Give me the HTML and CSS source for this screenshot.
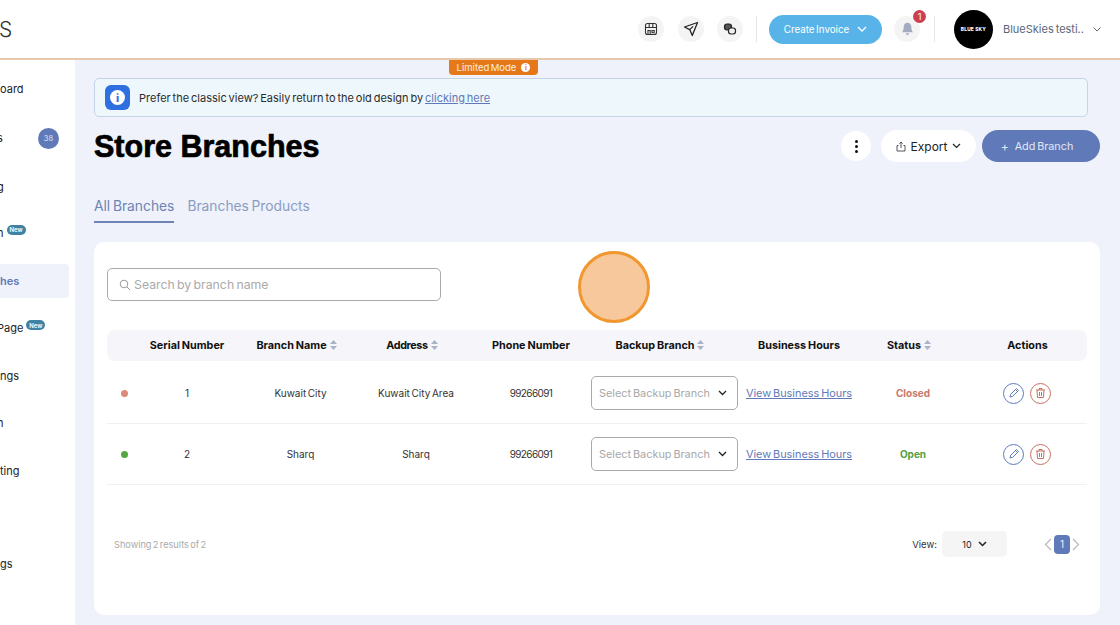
FILE: index.html
```html
<!DOCTYPE html>
<html lang="en">
<head>
<meta charset="utf-8">
<title>Store Branches</title>
<link rel="stylesheet" href="styles.css">
</head>
<body>
<header class="topbar">
  <div class="logo">S</div>
  <div class="top-actions">
    <span class="round-btn"><svg width="14" height="14" viewBox="0 0 14 14" fill="none" stroke="#333" stroke-width="1.1"><rect x="1.500" y="1.500" width="11" height="11" rx="2"/><path d="M1.500 5.500h11M5.200 1.500v4M8.800 1.500v4M4 12.500V8.500h2.200v4M8 8.500h2.200v2.200H8z"/></svg></span>
    <span class="round-btn"><svg width="16" height="16" viewBox="0 0 16 16" fill="none" stroke="#222" stroke-width="1.300" stroke-linejoin="round"><path d="M14.500 1.500 1.500 6l5.200 2.600 2.600 5.900zM6.700 8.600l3.400-3.200"/></svg></span>
    <span class="round-btn"><svg width="14" height="14" viewBox="0 0 14 14" fill="none" stroke="#222" stroke-width="1.200"><rect x="1.500" y="2" width="7" height="6" rx="2.400" fill="#555"/><rect x="5.500" y="6" width="7" height="6" rx="2.400" fill="#f3f3f3"/><path d="M7.500 9h.1M10.500 9h.1" stroke-width="1.400"/></svg></span>
    <span class="divider"></span>
    <button class="create-btn">Create Invoice
      <svg width="10" height="6" viewBox="0 0 10 6" fill="none" stroke="#fff" stroke-width="1.300"><path d="m1 1 4 4 4-4"/></svg>
    </button>
    <span class="round-btn bell-btn">
      <svg width="13" height="14" viewBox="0 0 13 14" fill="#a3abc0"><path d="M6.500 0.800c-2.400 0-3.800 1.900-3.800 4.200 0 2.600-.5 3.800-1.700 5.200h11c-1.200-1.400-1.700-2.600-1.700-5.200 0-2.300-1.400-4.200-3.800-4.200zM5 11.200h3c0 1-.6 1.800-1.500 1.800S5 12.200 5 11.200z"/></svg>
      <span class="bell-count">1</span>
    </span>
    <span class="divider divider-right"></span>
    <span class="avatar">BLUE SKY</span>
    <span class="user-name">BlueSkies testi..</span>
    <svg class="user-chevron" width="8" height="5" viewBox="0 0 8 5" fill="none" stroke="#667" stroke-width="1"><path d="m.5.500 3.500 3.500L7.500.5"/></svg>
  </div>
</header>

<div class="limited-tab">Limited Mode <span class="limited-i">i</span></div>

<div class="shell">
  <nav class="sidebar">
    <div class="nav-item tall">oard</div>
    <div class="nav-item tall"><span class="cut">s</span><span class="nav-count">38</span></div>
    <div class="nav-item tall"><span class="cut">g</span></div>
    <div class="nav-item short"><span class="cut">n</span><span class="nav-new">New</span></div>
    <div class="nav-item active">hes</div>
    <div class="nav-item"><span class="cut">Page</span><span class="nav-new">New</span></div>
    <div class="nav-item">ngs</div>
    <div class="nav-item"><span class="cut">n</span></div>
    <div class="nav-item">ting</div>
    <div class="nav-item spacer"></div>
    <div class="nav-item">gs</div>
  </nav>

  <main class="content">
    <div class="banner">
      <span class="banner-icon"><span class="banner-i">i</span></span>
      <span>Prefer the classic view? Easily return to the old design by <a class="banner-link" href="#">clicking here</a></span>
    </div>

    <div class="title-row">
      <h1 class="page-title">Store Branches</h1>
      <div class="title-actions">
        <button class="dots-btn"><span></span><span></span><span></span></button>
        <button class="export-btn">
          <svg width="10" height="11" viewBox="0 0 10 11" fill="none" stroke="#444" stroke-width=".9"><path d="M2.500 4.500H1v5.500h8V4.500H7.500M5 7V1M3.300 2.600 5 1l1.700 1.600"/></svg>
          Export
          <svg width="9" height="6" viewBox="0 0 9 6" fill="none" stroke="#222" stroke-width="1.200"><path d="m1 1 3.500 3.500L8 1"/></svg>
        </button>
        <button class="add-btn"><span class="plus">+</span> Add Branch</button>
      </div>
    </div>

    <div class="tabs">
      <span class="tab tab-active">All Branches</span>
      <span class="tab">Branches Products</span>
    </div>

    <section class="card">
      <div class="search">
        <svg width="12" height="12" viewBox="0 0 12 12" fill="none" stroke="#999" stroke-width="1"><circle cx="5" cy="5" r="3.800"/><path d="m8 8 3 3"/></svg>
        <span>Search by branch name</span>
      </div>

      <div class="table-row table-head">
        <span></span>
        <span>Serial Number</span>
        <span>Branch Name<svg class="sort" width="7" height="10" viewBox="0 0 7 10" fill="#aab2c8"><path d="M3.500 0 7 4H0zM3.500 10 0 6h7z"/></svg></span>
        <span class="head-tight">Address<svg class="sort" width="7" height="10" viewBox="0 0 7 10" fill="#aab2c8"><path d="M3.500 0 7 4H0zM3.500 10 0 6h7z"/></svg></span>
        <span>Phone Number</span>
        <span>Backup Branch<svg class="sort" width="7" height="10" viewBox="0 0 7 10" fill="#aab2c8"><path d="M3.500 0 7 4H0zM3.500 10 0 6h7z"/></svg></span>
        <span>Business Hours</span>
        <span>Status<svg class="sort" width="7" height="10" viewBox="0 0 7 10" fill="#aab2c8"><path d="M3.500 0 7 4H0zM3.500 10 0 6h7z"/></svg></span>
        <span>Actions</span>
      </div>

      <div class="table-row table-body row-first">
        <span class="dot dot-closed"></span>
        <span>1</span>
        <span>Kuwait City</span>
        <span>Kuwait City Area</span>
        <span class="phone">99266091</span>
        <span class="backup"><span>Select Backup Branch</span><svg width="9" height="6" viewBox="0 0 9 6" fill="none" stroke="#222" stroke-width="1.300"><path d="m1 1 3.500 3.500L8 1"/></svg></span>
        <a class="hours" href="#">View Business Hours</a>
        <span class="status status-closed">Closed</span>
        <span class="row-actions">
          <span class="act act-edit"><svg width="12" height="12" viewBox="0 0 12 12" fill="none" stroke="#6079b8" stroke-width="1"><path d="M2 10l.6-2.600L8.500 1.500l2 2-5.900 5.900zM7.500 2.500l2 2"/></svg></span>
          <span class="act act-del"><svg width="11" height="12" viewBox="0 0 11 12" fill="none" stroke="#c8705f" stroke-width="1"><path d="M1 3h9M4 3V1.500h3V3M2 3l.5 7.500h6L9 3M4.500 5v4M6.500 5v4"/></svg></span>
        </span>
      </div>

      <div class="table-row table-body">
        <span class="dot dot-open"></span>
        <span>2</span>
        <span>Sharq</span>
        <span>Sharq</span>
        <span class="phone">99266091</span>
        <span class="backup"><span>Select Backup Branch</span><svg width="9" height="6" viewBox="0 0 9 6" fill="none" stroke="#222" stroke-width="1.300"><path d="m1 1 3.500 3.500L8 1"/></svg></span>
        <a class="hours" href="#">View Business Hours</a>
        <span class="status status-open">Open</span>
        <span class="row-actions">
          <span class="act act-edit"><svg width="12" height="12" viewBox="0 0 12 12" fill="none" stroke="#6079b8" stroke-width="1"><path d="M2 10l.6-2.600L8.500 1.500l2 2-5.900 5.900zM7.500 2.500l2 2"/></svg></span>
          <span class="act act-del"><svg width="11" height="12" viewBox="0 0 11 12" fill="none" stroke="#c8705f" stroke-width="1"><path d="M1 3h9M4 3V1.500h3V3M2 3l.5 7.500h6L9 3M4.500 5v4M6.500 5v4"/></svg></span>
        </span>
      </div>

      <div class="table-foot">
        <span class="results">Showing 2 results of 2</span>
        <span class="view-label">View:</span>
        <span class="view-select">10
          <svg width="9" height="6" viewBox="0 0 9 6" fill="none" stroke="#222" stroke-width="1.500"><path d="m1 1 3.500 3.500L8 1"/></svg>
        </span>
        <span class="pager">
          <svg width="8" height="13" viewBox="0 0 8 13" fill="none" stroke="#b5b5b5" stroke-width="1.100"><path d="M7 1 1.500 6.500 7 12"/></svg>
          <span class="page-num">1</span>
          <svg width="8" height="13" viewBox="0 0 8 13" fill="none" stroke="#b5b5b5" stroke-width="1.100"><path d="m1 1 5.500 5.500L1 12"/></svg>
        </span>
      </div>
    </section>
  </main>
</div>

<div class="click-marker"></div>
</body>
</html>
```

FILE: styles.css
```css
* { box-sizing: border-box; }
html, body { height: 100%; }
body {
  margin: 0;
  overflow: hidden;
  background: #eff2fa;
  color: #222;
  font-family: Inter, "Liberation Sans", sans-serif;
  font-size: 11px;
  word-spacing: -1.2px;
}
button { font-family: inherit; word-spacing: inherit; border: 0; cursor: pointer; }

.topbar {
  height: 60px;
  background: #fff;
  border-bottom: 2px solid #e6c8ad;
  display: flex;
  align-items: center;
}
.logo { font-size: 21px; color: #333; margin-left: -1px; font-weight: 300; }
.top-actions { margin-left: auto; display: flex; align-items: center; padding-right: 19px; }
.round-btn {
  width: 26px; height: 26px; border-radius: 50%;
  background: #f4f4f4;
  display: flex; align-items: center; justify-content: center;
  margin-right: 13.500px;
  position: relative;
}
.divider { width: 1px; height: 26px; background: #e6e6e6; margin: 0 12px 0 -.5px; }
.create-btn {
  width: 113px; height: 29px; border-radius: 15px;
  background: #58b4e8; color: #fff; font-size: 9.800px;
  display: flex; align-items: center; justify-content: center; gap: 8px;
  margin-right: 12px;
}
.bell-btn { margin-right: 0; }
.bell-count {
  position: absolute; top: -6px; right: -6px;
  width: 13px; height: 13px; border-radius: 50%;
  background: #cc3f52; color: #fff; font-size: 9px;
  display: flex; align-items: center; justify-content: center;
}
.divider-right { margin: 0 19px 0 14px; }
.avatar {
  width: 39px; height: 39px; border-radius: 50%; background: #000; color: #fff;
  font-size: 4.800px; font-weight: 800; word-spacing: 0; letter-spacing: .2px;
  display: flex; align-items: center; justify-content: center;
  white-space: nowrap; margin-right: 10px;
}
.user-name { font-size: 11px; color: #5b6678; width: 90px; white-space: nowrap; }

.limited-tab {
  position: absolute; left: 449px; top: 60px; width: 89px; height: 15px;
  background: #e5791a; color: #fdeee0; font-size: 9.500px; border-radius: 0 0 4px 4px;
  display: flex; align-items: center; justify-content: center; gap: 5px;
}
.limited-i {
  width: 9px; height: 9px; border-radius: 50%; background: #fff; color: #e5791a;
  font-size: 7px; font-weight: 700; display: flex; align-items: center; justify-content: center;
}

.shell { display: flex; height: 565px; }
.sidebar {
  width: 75px; flex: none; background: #fff; overflow: hidden;
  padding-top: 4.500px; font-size: 11px; color: #222;
}
.nav-item {
  height: 47.500px; width: 69px; display: flex; align-items: center; position: relative;
  white-space: nowrap;
}
.nav-item.tall { height: 49px; }
.nav-item.short { height: 42px; }
.nav-item.spacer { height: 46px; }
.nav-item.active {
  background: #eff2fa; color: #6079b8; font-weight: 600;
  height: 34px; margin: 10.500px 0 6.500px; border-radius: 0 4px 4px 0;
}
.cut { margin-left: -3px; }
.nav-count {
  position: absolute; left: 38px; top: 14px;
  width: 21px; height: 21px; border-radius: 50%; background: #6079b8; color: #dfe6f5;
  font-size: 7.500px; display: flex; align-items: center; justify-content: center;
}
.nav-new {
  margin: -6px 0 0 3px; width: 19px; height: 10px; border-radius: 5px;
  background: #3f82a3; color: #eaf5fa; font-size: 6px; font-weight: 700;
  display: flex; align-items: center; justify-content: center;
}

.content { flex: 1; padding: 18px 20px 10px 19px; min-width: 0; }
.banner {
  height: 39px; margin-right: 12px; padding-left: 10px;
  background: #eef7fc; border: 1px solid #c5d4e6; border-radius: 5px;
  display: flex; align-items: center; gap: 9px; color: #2c2c2c; font-size: 11px;
}
.banner-icon {
  width: 25px; height: 25px; border-radius: 6px; background: #2f6fe0;
  display: flex; align-items: center; justify-content: center;
}
.banner-i {
  width: 15px; height: 15px; border-radius: 50%; background: #fff; color: #2f6fe0;
  font-size: 11px; font-weight: 800; display: flex; align-items: center; justify-content: center;
}
.banner-link { color: #6079b8; }

.title-row {
  display: flex; align-items: center; justify-content: space-between;
  height: 32px; margin-top: 13px;
}
.page-title {
  margin: 0; font-family: "Liberation Sans", Arial, sans-serif; word-spacing: 0;
  font-size: 30.500px; font-weight: 700; color: #000;
  -webkit-text-stroke: .7px #000;
}
.title-actions { display: flex; align-items: center; }
.dots-btn {
  width: 30px; height: 30px; border-radius: 50%; background: #fff; margin-right: 10px;
  display: flex; flex-direction: column; align-items: center; justify-content: center; gap: 2px; padding: 0;
}
.dots-btn span { width: 3px; height: 3px; border-radius: 50%; background: #111; }
.export-btn {
  width: 95px; height: 32px; border-radius: 16px; background: #fff; color: #222;
  font-size: 12px; display: flex; align-items: center; justify-content: center; gap: 5px;
  margin-right: 6px;
}
.add-btn {
  width: 118px; height: 32px; border-radius: 16px; background: #6079b8; color: #e3e8f5;
  font-size: 10.800px; display: flex; align-items: center; justify-content: center; gap: 6px;
  padding: 1px 8px 0 0;
}
.plus { font-size: 12px; }

.tabs { display: flex; gap: 13px; margin-top: 29px; height: 32px; }
.tab { color: #8a9cc4; font-size: 13.800px; height: 32px; line-height: 30px; }
.tab-active { color: #6d84b5; border-bottom: 2px solid #6d84b5; }

.card {
  margin-top: 19px; height: 373px; background: #fff; border-radius: 10px;
  padding: 26px 13px 0;
}
.search {
  width: 334px; height: 33px; border: 1px solid #aaa; border-radius: 5px;
  display: flex; align-items: center; gap: 3px; padding-left: 11px;
  color: #aaa; font-size: 12.300px;
}
.table-row {
  display: grid;
  grid-template-columns: 24px 112px 115px 116px 114px 152px 118px 110px 119px;
  align-items: center; justify-items: center;
}
.table-head {
  margin-top: 29px; height: 31px; background: #f5f5fa; border-radius: 8px;
  font-size: 10.800px; font-weight: 700; color: #111; word-spacing: -.6px;
}
.sort { margin: 0 8px 0 3px; vertical-align: -1px; }
.head-tight { letter-spacing: -.4px; }
.table-body {
  height: 61px; border-bottom: 1px solid #f0f0f3; font-size: 10px; color: #333;
}
.row-first { height: 63px; padding-top: 2px; }
.phone { letter-spacing: -.6px; }
.dot { width: 7px; height: 7px; border-radius: 50%; margin-left: 10px; }
.dot-closed { background: #dc8a78; }
.dot-open { background: #52a83f; }
.backup {
  width: 147px; height: 34px; border: 1px solid #aaa; border-radius: 5px;
  display: flex; align-items: center; justify-content: space-between;
  padding: 0 10px 0 7px; color: #a8a8a8; font-size: 10.900px; white-space: nowrap;
  margin-left: 1px;
}
.hours { color: #6079b8; font-size: 10.900px; white-space: nowrap; }
.status { font-weight: 700; font-size: 10px; }
.status-closed { color: #c9786a; }
.status-open { color: #4f9e3f; }
.row-actions { display: flex; gap: 6px; margin-right: 1px; }
.act {
  width: 21px; height: 21px; border-radius: 50%; background: #fff;
  display: flex; align-items: center; justify-content: center;
}
.act-edit { border: 1px solid #6079b8; }
.act-del { border: 1px solid #c8705f; }

.table-foot {
  display: flex; align-items: center; margin-top: 46px; height: 26px; padding-left: 7px;
}
.results { color: #aaa; font-size: 9.200px; }
.view-label { margin-left: auto; font-size: 9.500px; color: #333; margin-right: 5px; }
.view-select {
  width: 65px; height: 26px; border-radius: 5px; background: #f5f5f5;
  display: flex; align-items: center; justify-content: center; gap: 6px;
  font-size: 9px; color: #222;
}
.pager { display: flex; align-items: center; gap: 2px; margin: 0 7px 0 37px; }
.page-num {
  width: 16px; height: 19px; border-radius: 4px; background: #6079b8; color: #eef1fa;
  display: flex; align-items: center; justify-content: center; font-size: 10px;
}

.click-marker {
  position: absolute; left: 578px; top: 251px; width: 72px; height: 72px;
  border-radius: 50%; background: #f7c89b; border: 3px solid #f0972f;
}
```
